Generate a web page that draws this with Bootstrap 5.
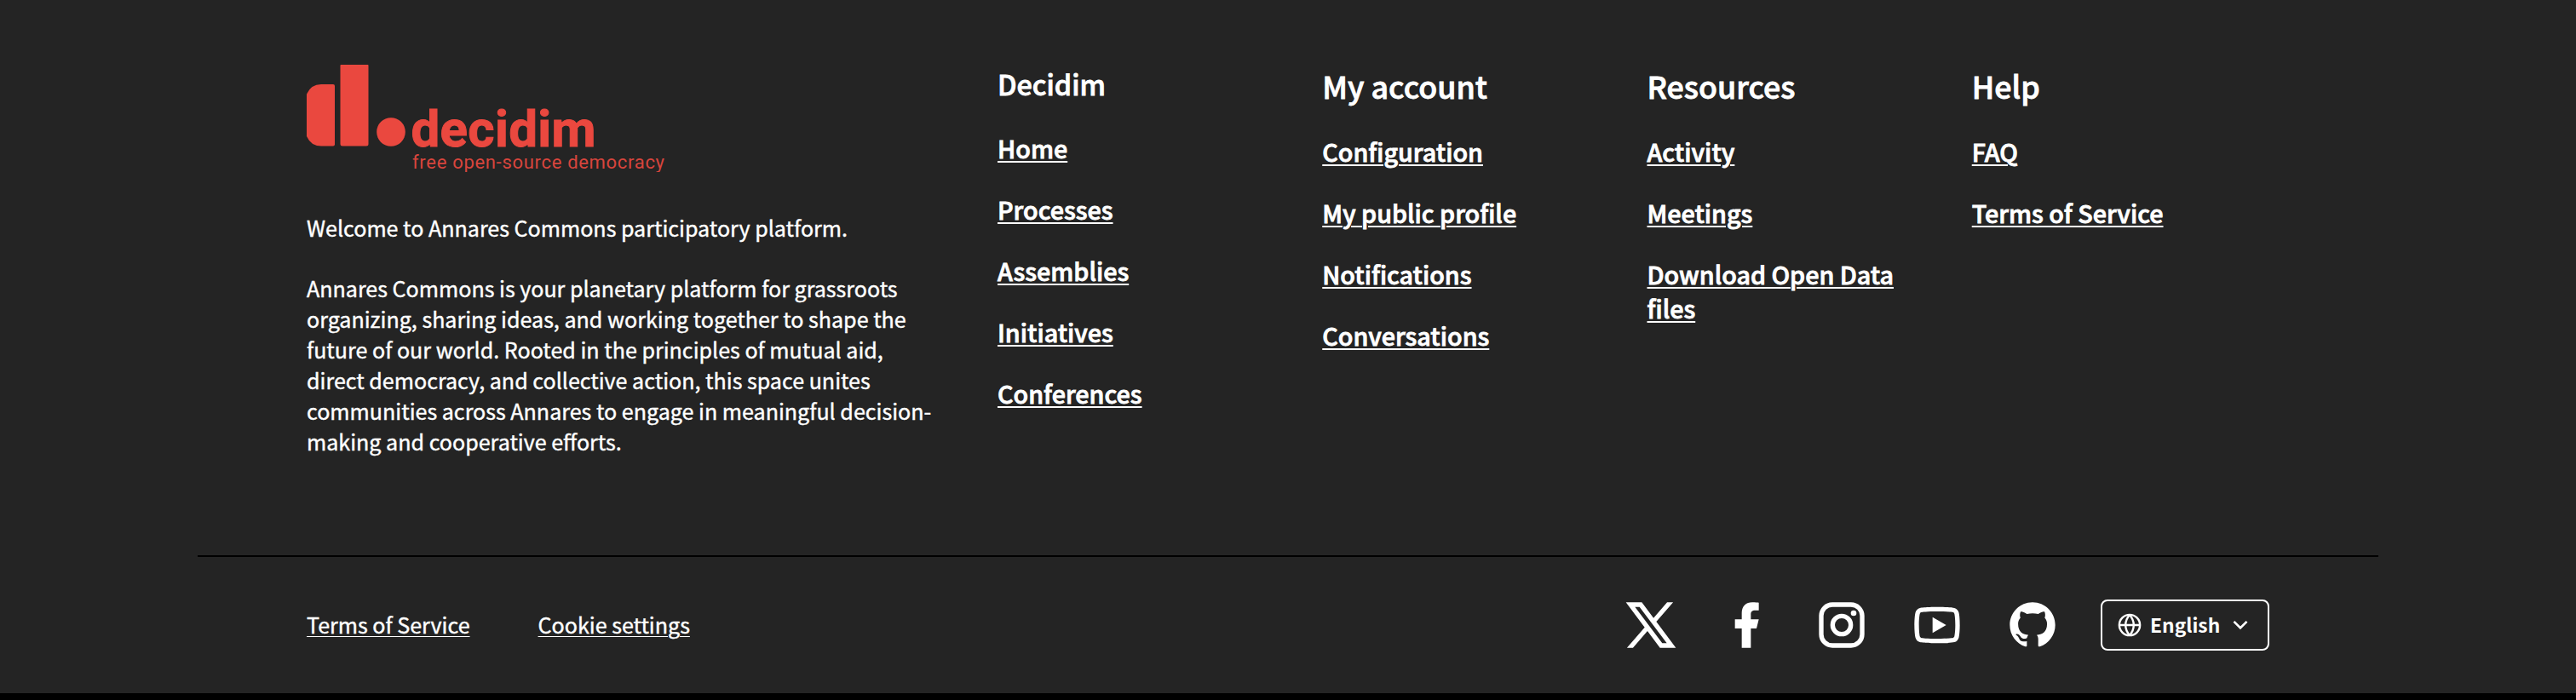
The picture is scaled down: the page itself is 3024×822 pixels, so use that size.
<!DOCTYPE html>
<html lang="en">
<head>
<meta charset="utf-8">
<meta name="viewport" content="width=device-width, initial-scale=1">
<title>Annares Commons</title>
<link href="https://cdn.jsdelivr.net/npm/bootstrap@5.3.0/dist/css/bootstrap.min.css" rel="stylesheet">
<style>
body{background:#000;height:822px;overflow:hidden;font-family:"Noto Sans CJK SC",sans-serif}
footer{background:#242424;color:#fff;height:814px}
.foot-wrap{width:2560px;padding:0 128px}
.foot-top{height:652px;padding-top:76px}
.foot-grid{display:grid;grid-template-columns:747px 1fr;column-gap:64px}
.foot-links{display:grid;grid-template-columns:repeat(4,1fr);column-gap:32px}
.foot-links ul{gap:32px;margin-top:34px}
.foot-links .title-sm + ul{margin-top:33px}
.intro svg{width:420px;height:126px;margin-bottom:47px}
.intro p{font-size:25.07px;line-height:36px;margin-bottom:35px;-webkit-text-stroke:.4px #fff}
.foot-top h2{font-size:35.8px;line-height:48px;font-weight:500;-webkit-text-stroke:.8px #fff}
.foot-top h2.title-sm{font-size:32.3px;line-height:45px}
.foot-top li{font-size:28.7px;line-height:40px;font-weight:500;-webkit-text-stroke:.8px #fff}
.foot-top a{text-underline-offset:3px;text-decoration-thickness:2px}
.foot-bar{border-top:2px solid #000;height:162px}
.foot-legal{gap:80px;padding-bottom:2px}
.foot-legal a{font-size:25.07px;line-height:36px;-webkit-text-stroke:.4px #fff;text-underline-offset:3px;text-decoration-thickness:1px}
.foot-social{gap:48px}
.foot-social a svg{width:64px;height:64px}
.btn-lang{width:198px;height:60px;border:2px solid #fff;border-radius:8px;padding:0 16px;font-size:22.8px;line-height:32px}
.btn-lang svg{width:32px;height:32px}
</style>
</head>
<body>
<footer>
  <div class="foot-wrap foot-top mx-auto">
    <div class="foot-grid">
      <div class="intro">
        <svg class="d-block" viewBox="0 0 420 126" fill="#ea483f" role="img" aria-label="decidim, free open-source democracy">
          <path d="M17 23H31Q33 23 33 25V93.500Q33 95.500 31 95.500H17Q5 95.500 0 84V34.500Q5 23 17 23Z"/>
          <rect x="39.500" y="-1" width="33" height="96.500" rx="2.500"/>
          <circle cx="99" cy="79" r="16.800"/>
          <text x="122.500" y="95.500" font-family="Roboto" font-weight="700" font-size="60" textLength="217" stroke="#ea483f" stroke-width="1">decidim</text>
          <text x="124" y="121.500" font-family="Roboto" font-weight="400" font-size="22" textLength="296" fill="#d8453d">free open-source democracy</text>
        </svg>
        <p>Welcome to Annares Commons participatory platform.</p>
        <p class="mb-0">Annares Commons is your planetary platform for grassroots organizing, sharing ideas, and working together to shape the future of our world. Rooted in the principles of mutual aid, direct democracy, and collective action, this space unites communities across Annares to engage in meaningful decision-making and cooperative efforts.</p>
      </div>
      <nav class="foot-links">
        <div>
          <h2 class="title-sm mb-0">Decidim</h2>
          <ul class="list-unstyled d-flex flex-column mb-0">
            <li><a class="text-white" href="#">Home</a></li>
            <li><a class="text-white" href="#">Processes</a></li>
            <li><a class="text-white" href="#">Assemblies</a></li>
            <li><a class="text-white" href="#">Initiatives</a></li>
            <li><a class="text-white" href="#">Conferences</a></li>
          </ul>
        </div>
        <div>
          <h2 class="mb-0">My account</h2>
          <ul class="list-unstyled d-flex flex-column mb-0">
            <li><a class="text-white" href="#">Configuration</a></li>
            <li><a class="text-white" href="#">My public profile</a></li>
            <li><a class="text-white" href="#">Notifications</a></li>
            <li><a class="text-white" href="#">Conversations</a></li>
          </ul>
        </div>
        <div>
          <h2 class="mb-0">Resources</h2>
          <ul class="list-unstyled d-flex flex-column mb-0">
            <li><a class="text-white" href="#">Activity</a></li>
            <li><a class="text-white" href="#">Meetings</a></li>
            <li><a class="text-white" href="#">Download Open Data files</a></li>
          </ul>
        </div>
        <div>
          <h2 class="mb-0">Help</h2>
          <ul class="list-unstyled d-flex flex-column mb-0">
            <li><a class="text-white" href="#">FAQ</a></li>
            <li><a class="text-white" href="#">Terms of Service</a></li>
          </ul>
        </div>
      </nav>
    </div>
  </div>
  <div class="foot-wrap foot-bar mx-auto d-flex align-items-center justify-content-between">
    <div class="foot-legal d-flex">
      <a class="text-white" href="#">Terms of Service</a>
      <a class="text-white" href="#">Cookie settings</a>
    </div>
    <div class="foot-social d-flex align-items-center">
      <a class="d-flex text-white" href="#" aria-label="X"><svg viewBox="0 0 24 24" fill="currentColor"><path d="M8 2H1L9.26086 13.0145L1.44995 21.9999H4.09998L10.4883 14.651L16 22H23L14.3917 10.5223L21.8001 2H19.1501L13.1643 8.88578L8 2ZM17 20L5 4H7L19 20H17Z"/></svg></a>
      <a class="d-flex text-white" href="#" aria-label="Facebook"><svg viewBox="0 0 24 24" fill="currentColor"><path d="M14 13.5H16.5L17.5 9.5H14V7.5C14 6.47062 14 5.5 16 5.5H17.5V2.1401C17.1743 2.09685 15.943 2 14.6429 2C11.9284 2 10 3.65686 10 6.69971V9.5H7V13.5H10V22H14V13.5Z"/></svg></a>
      <a class="d-flex text-white" href="#" aria-label="Instagram"><svg viewBox="0 0 24 24" fill="none" stroke="currentColor" stroke-width="2"><rect x="3" y="3" width="18" height="18" rx="4.900"/><circle cx="12" cy="12" r="4"/><circle cx="17.250" cy="6.750" r="1.250" fill="currentColor" stroke="none"/></svg></a>
      <a class="d-flex text-white" href="#" aria-label="YouTube"><svg viewBox="0 0 24 24" fill="currentColor"><path d="M19.6069 6.99482C19.5307 6.69695 19.3152 6.47221 19.0684 6.40288C18.6299 6.28062 16.501 6 12.001 6C7.50098 6 5.37252 6.28073 4.93225 6.40323C4.68776 6.47123 4.4722 6.69593 4.3951 6.99482C4.2863 7.41923 4.00098 9.19595 4.00098 12C4.00098 14.804 4.2863 16.5808 4.3954 17.0064C4.47126 17.3031 4.68676 17.5278 4.93251 17.5968C5.37252 17.7193 7.50098 18 12.001 18C16.501 18 18.6299 17.7194 19.0697 17.5968C19.3142 17.5288 19.5297 17.3041 19.6069 17.0052C19.7157 16.5808 20.001 14.8 20.001 12C20.001 9.2 19.7157 7.41923 19.6069 6.99482ZM21.5442 6.49818C22.001 8.28 22.001 12 22.001 12C22.001 12 22.001 15.72 21.5442 17.5018C21.2897 18.4873 20.547 19.2618 19.6056 19.5236C17.8971 20 12.001 20 12.001 20C12.001 20 6.10837 20 4.39637 19.5236C3.45146 19.2582 2.70879 18.4836 2.45774 17.5018C2.00098 15.72 2.00098 12 2.00098 12C2.00098 12 2.00098 8.28 2.45774 6.49818C2.71227 5.51273 3.45495 4.73818 4.39637 4.47636C6.10837 4 12.001 4 12.001 4C12.001 4 17.8971 4 19.6056 4.47636C20.5505 4.74182 21.2932 5.51636 21.5442 6.49818ZM10.001 15.5V8.5L16.001 12L10.001 15.5Z"/></svg></a>
      <a class="d-flex text-white" href="#" aria-label="GitHub"><svg viewBox="0 0 24 24" fill="currentColor"><path d="M12.001 2C6.47598 2 2.00098 6.475 2.00098 12C2.00098 16.425 4.86348 20.1625 8.83848 21.4875C9.33848 21.575 9.52598 21.275 9.52598 21.0125C9.52598 20.775 9.51348 19.9875 9.51348 19.15C7.00098 19.6125 6.35098 18.5375 6.15098 17.975C6.03848 17.6875 5.55098 16.8 5.12598 16.5625C4.77598 16.375 4.27598 15.9125 5.11348 15.9C5.90098 15.8875 6.46348 16.625 6.65098 16.925C7.55098 18.4375 8.98848 18.0125 9.56348 17.75C9.65098 17.1 9.91348 16.6625 10.201 16.4125C7.97598 16.1625 5.65098 15.3 5.65098 11.475C5.65098 10.3875 6.03848 9.4875 6.67598 8.7875C6.57598 8.5375 6.22598 7.5125 6.77598 6.1375C6.77598 6.1375 7.61348 5.875 9.52598 7.1625C10.326 6.9375 11.176 6.825 12.026 6.825C12.876 6.825 13.726 6.9375 14.526 7.1625C16.4385 5.8625 17.276 6.1375 17.276 6.1375C17.826 7.5125 17.476 8.5375 17.376 8.7875C18.0135 9.4875 18.401 10.375 18.401 11.475C18.401 15.3125 16.0635 16.1625 13.8385 16.4125C14.201 16.725 14.5135 17.325 14.5135 18.2625C14.5135 19.6 14.501 20.675 14.501 21.0125C14.501 21.275 14.6885 21.5875 15.1885 21.4875C19.259 20.1133 21.9999 16.2963 22.001 12C22.001 6.475 17.526 2 12.001 2Z"/></svg></a>
      <button type="button" class="btn-lang bg-transparent text-white fw-bold d-flex align-items-center">
        <svg class="me-2" viewBox="0 0 24 24" fill="none" stroke="currentColor" stroke-width="1.800"><circle cx="12" cy="12" r="9.100"/><path d="M3 12H21M12 3C7.200 8.500 7.200 15.500 12 21M12 3C16.800 8.500 16.800 15.500 12 21"/></svg>
        <span>English</span>
        <svg class="ms-auto" viewBox="0 0 24 24" fill="currentColor"><path d="M12 13.172L16.950 8.222L18.364 9.636L12 16L5.636 9.636L7.050 8.222L12 13.172Z"/></svg>
      </button>
    </div>
  </div>
</footer>
<script src="https://cdn.jsdelivr.net/npm/bootstrap@5.3.0/dist/js/bootstrap.bundle.min.js"></script>
</body>
</html>
